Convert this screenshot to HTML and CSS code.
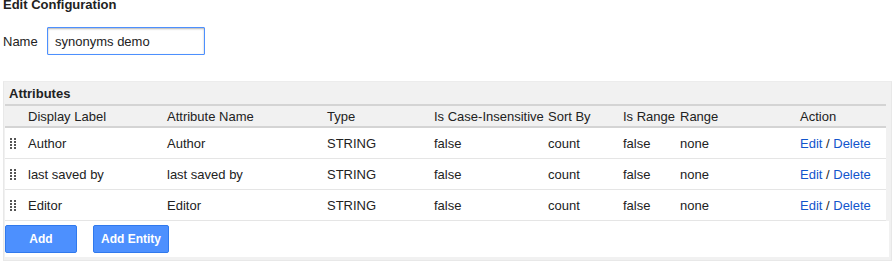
FILE: index.html
```html
<!DOCTYPE html>
<html lang="en">
  <head>
    <meta charset="utf-8" />
    <title>Edit Configuration</title>
    <link rel="stylesheet" href="styles.css">
  </head>
  <body>
    <h1 class="page-title">Edit Configuration</h1>
    <div class="name-row">
      <label class="name-label" for="name">Name</label>
      <input class="name-input" id="name" type="text" value="synonyms demo" />
    </div>

    <section class="panel">
      <h2 class="panel-title">Attributes</h2>
      <table class="attr-table">
        <colgroup>
          <col style="width: 18px">
          <col style="width: 139px">
          <col style="width: 160px">
          <col style="width: 107px">
          <col style="width: 114px">
          <col style="width: 75px">
          <col style="width: 57px">
          <col style="width: 120px">
          <col>
        </colgroup>
        <thead>
          <tr>
            <th></th>
            <th>Display Label</th>
            <th>Attribute Name</th>
            <th>Type</th>
            <th>Is Case-Insensitive</th>
            <th>Sort By</th>
            <th>Is Range</th>
            <th>Range</th>
            <th>Action</th>
          </tr>
        </thead>
        <tbody>
          <tr>
            <td class="handle"><svg width="6" height="12" viewBox="0 0 6 12"><rect x="0" y="0" width="2" height="2"/><rect x="4" y="0" width="2" height="2"/><rect x="0" y="3" width="2" height="2"/><rect x="4" y="3" width="2" height="2"/><rect x="0" y="6" width="2" height="2"/><rect x="4" y="6" width="2" height="2"/><rect x="0" y="9" width="2" height="2"/><rect x="4" y="9" width="2" height="2"/></svg></td>
            <td>Author</td>
            <td>Author</td>
            <td>STRING</td>
            <td>false</td>
            <td>count</td>
            <td>false</td>
            <td>none</td>
            <td><a href="#" class="link">Edit</a> / <a href="#" class="link">Delete</a></td>
          </tr>
          <tr>
            <td class="handle"><svg width="6" height="12" viewBox="0 0 6 12"><rect x="0" y="0" width="2" height="2"/><rect x="4" y="0" width="2" height="2"/><rect x="0" y="3" width="2" height="2"/><rect x="4" y="3" width="2" height="2"/><rect x="0" y="6" width="2" height="2"/><rect x="4" y="6" width="2" height="2"/><rect x="0" y="9" width="2" height="2"/><rect x="4" y="9" width="2" height="2"/></svg></td>
            <td>last saved by</td>
            <td>last saved by</td>
            <td>STRING</td>
            <td>false</td>
            <td>count</td>
            <td>false</td>
            <td>none</td>
            <td><a href="#" class="link">Edit</a> / <a href="#" class="link">Delete</a></td>
          </tr>
          <tr>
            <td class="handle"><svg width="6" height="12" viewBox="0 0 6 12"><rect x="0" y="0" width="2" height="2"/><rect x="4" y="0" width="2" height="2"/><rect x="0" y="3" width="2" height="2"/><rect x="4" y="3" width="2" height="2"/><rect x="0" y="6" width="2" height="2"/><rect x="4" y="6" width="2" height="2"/><rect x="0" y="9" width="2" height="2"/><rect x="4" y="9" width="2" height="2"/></svg></td>
            <td>Editor</td>
            <td>Editor</td>
            <td>STRING</td>
            <td>false</td>
            <td>count</td>
            <td>false</td>
            <td>none</td>
            <td><a href="#" class="link">Edit</a> / <a href="#" class="link">Delete</a></td>
          </tr>
        </tbody>
      </table>
      <div class="actions">
        <button class="btn btn-add">Add</button>
        <button class="btn btn-entity">Add Entity</button>
      </div>
    </section>
  </body>
</html>
```

FILE: styles.css
```css
body {
  margin: 0;
  padding: 0 3px;
  font-family: "Liberation Sans", Arial, sans-serif;
  font-size: 13px;
  color: #222;
  background: #fff;
}

.page-title {
  font-size: 13px;
  font-weight: bold;
  line-height: 16px;
  margin: -3px 0 0;
}

.name-row {
  display: flex;
  align-items: center;
  margin-top: 14px;
}

.name-label {
  width: 44px;
}

.name-input {
  box-sizing: border-box;
  width: 158px;
  height: 28px;
  margin: 0;
  padding: 0 7px;
  border: 1px solid #4d90fe;
  border-radius: 1px;
  outline: none;
  box-shadow: inset 0 1px 2px rgba(0, 0, 0, 0.3);
  font-family: inherit;
  font-size: 13px;
  color: #222;
}

.panel {
  margin-top: 26px;
  background: #f1f1f1;
  border: 1px solid #e8e8e8;
  border-top-color: #ececec;
  padding: 0 2px 3px 1px;
  width: 884px;
}

.panel-title {
  font-size: 13px;
  font-weight: bold;
  line-height: 20px;
  margin: 0;
  padding: 2px 0 0 4px;
}

.attr-table {
  table-layout: fixed;
  width: 881px;
  border-collapse: collapse;
  border-top: 2px solid #d4d4d4;
}

.attr-table th {
  font-weight: normal;
  text-align: left;
  white-space: nowrap;
  height: 20px;
  padding: 0 5px;
  background: #f1f1f1;
  border-bottom: 2px solid #d4d4d4;
}

.attr-table td {
  height: 29px;
  padding: 0 5px;
  background: #fff;
  border-bottom: 1px solid #e5e5e5;
}

.attr-table td.handle {
  padding: 1px 0 0 5px;
  line-height: 0;
}

.handle svg {
  fill: #555;
}

.link {
  color: #15c;
  text-decoration: none;
}

.actions {
  background: #fff;
  display: flex;
  gap: 16px;
  padding: 4px 0 4px;
}

.btn {
  box-sizing: border-box;
  height: 28px;
  margin: 0;
  border: 1px solid #3079ed;
  border-radius: 2px;
  background: #4d90fe;
  color: #fff;
  font-family: inherit;
  font-size: 12px;
  font-weight: bold;
  padding: 0;
}

.btn-add {
  width: 72px;
}

.btn-entity {
  width: 76px;
}
```
